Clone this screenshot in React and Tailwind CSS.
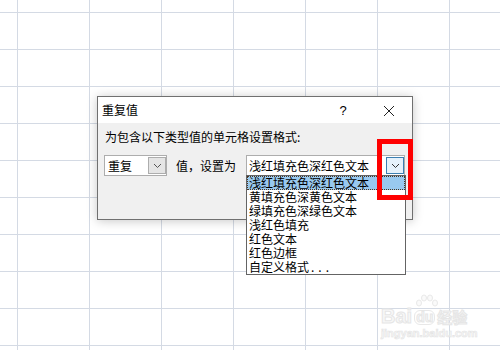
import React from "react";

const font = { fontFamily: '"Noto Sans CJK SC", "Noto Sans", sans-serif' };

function Chevron({ color = "#555" }) {
  return (
    <svg width="9" height="6" viewBox="0 0 9 6">
      <polyline points="1,1 4.5,4.5 8,1" fill="none" stroke={color} strokeWidth="1" />
    </svg>
  );
}

const items = [
  "浅红填充色深红色文本",
  "黄填充色深黄色文本",
  "绿填充色深绿色文本",
  "浅红色填充",
  "红色文本",
  "红色边框",
];

export default function App() {
  const cells = Array.from({ length: 11 * 8 });
  return (
    <div className="relative w-[500px] h-[350px] overflow-hidden bg-white text-[12px] leading-[14px] text-black" style={font}>
      {/* spreadsheet grid */}
      <div className="-ml-[54px] -mt-[24px] grid grid-cols-[repeat(8,72px)] grid-rows-[repeat(11,37px)]">
        {cells.map((_, i) => (
          <div key={i} className="border-r border-b border-[#d4dae4]" />
        ))}
      </div>

      {/* watermark */}
      <div className="absolute left-[381px] top-[292px] w-[100px] select-none">
        <svg className="absolute left-[33px] top-[2px]" width="26" height="18" viewBox="0 0 26 18">
          <g fill="#fafafa" stroke="#e9e9e9" strokeWidth="1">
            <ellipse cx="5" cy="9" rx="2.5" ry="3" />
            <ellipse cx="10" cy="4" rx="2.5" ry="3" />
            <ellipse cx="16" cy="4" rx="2.5" ry="3" />
            <ellipse cx="21" cy="9" rx="2.5" ry="3" />
          </g>
        </svg>
        <div className="flex items-end mt-[15px] h-[18px]">
          <span className="text-[20px] leading-[18px] font-bold text-[#f8f8f8] [-webkit-text-stroke:1px_#e6e6e6]" style={{ fontFamily: '"Liberation Sans", sans-serif' }}>Bai</span>
          <span className="ml-[2px] rounded-[6px] border border-[#e8e8e8] px-[1px] text-[14px] leading-[13px] font-bold text-[#f8f8f8] [-webkit-text-stroke:1px_#e6e6e6]" style={{ fontFamily: '"Liberation Sans", sans-serif' }}>du</span>
          <span className="ml-[2px] text-[15px] leading-[16px] font-bold text-[#f8f8f8] [-webkit-text-stroke:1px_#e6e6e6]">经验</span>
        </div>
        <div className="mt-[2px] text-[11px] leading-[12px] font-bold text-[#f8f8f8] [-webkit-text-stroke:0.6px_#e4e4e4]" style={{ fontFamily: '"Liberation Sans", sans-serif' }}>jingyan.baidu.com</div>
      </div>

      {/* dialog */}
      <div className="absolute left-[97px] top-[96px] w-[316px] h-[124px] border border-[#707070] bg-[#f0f0f0] shadow-[0_1px_10px_rgba(0,0,0,0.22)] flex flex-col">
        <div className="h-[26px] bg-white flex items-center pl-[4px]">
          <span className="text-[12px]">重复值</span>
          <span className="ml-auto w-[46px] text-center text-[13px] pt-[2px]" style={{ fontFamily: '"Liberation Sans", sans-serif' }}>?</span>
          <span className="w-[46px] flex justify-center items-center pt-[2px]">
            <svg width="12" height="12" viewBox="0 0 12 12">
              <line x1="1" y1="1" x2="11" y2="11" stroke="#222" strokeWidth="1" />
              <line x1="11" y1="1" x2="1" y2="11" stroke="#222" strokeWidth="1" />
            </svg>
          </span>
        </div>
        <div className="pl-[7px] pt-[7px]">
          <div>为包含以下类型值的单元格设置格式:</div>
          <div className="mt-[11px] -ml-[1px] flex items-center">
            <div className="w-[63px] h-[21px] bg-white border border-[#adadad] flex items-center pl-[3px]">
              <span>重复</span>
              <div className="ml-auto w-[18px] h-[17px] bg-[#e5e5e5] border border-[#adadad] flex items-center justify-center">
                <Chevron />
              </div>
            </div>
            <span className="ml-[9px]">值，设置为</span>
            <div className="relative ml-[10px] w-[159px] h-[21px] bg-white border border-[#adadad] flex items-center pl-[2px]">
              <span>浅红填充色深红色文本</span>
              <div className="ml-auto w-[18px] h-[17px] bg-[#e5f1fb] border border-[#3c7fb1] flex items-center justify-center">
                <Chevron color="#333" />
              </div>
              {/* dropdown list */}
              <div className="absolute left-[-1px] top-[19px] w-[160px] h-[100px] bg-white border border-[#646464] flex flex-col z-10">
                {items.map((t, i) => (
                  <div
                    key={t}
                    className={
                      i === 0
                        ? "h-[14px] shrink-0 pl-[1px] bg-[#99c9ef] border border-dotted border-[#4a3520] flex items-center leading-[14px]"
                        : "h-[14px] shrink-0 pl-[2px] flex items-center leading-[14px]"
                    }
                  >
                    {t}
                  </div>
                ))}
                <div className="h-[14px] shrink-0 pl-[2px] flex items-center leading-[14px]">
                  自定义格式<span className="tracking-[4px] pl-[2px]">...</span>
                </div>
              </div>
            </div>
          </div>
        </div>
      </div>

      {/* red highlight */}
      <div className="absolute left-[377px] top-[139px] w-[36px] h-[61px] border-[5px] border-[#ff0000] z-20" />
    </div>
  );
}
